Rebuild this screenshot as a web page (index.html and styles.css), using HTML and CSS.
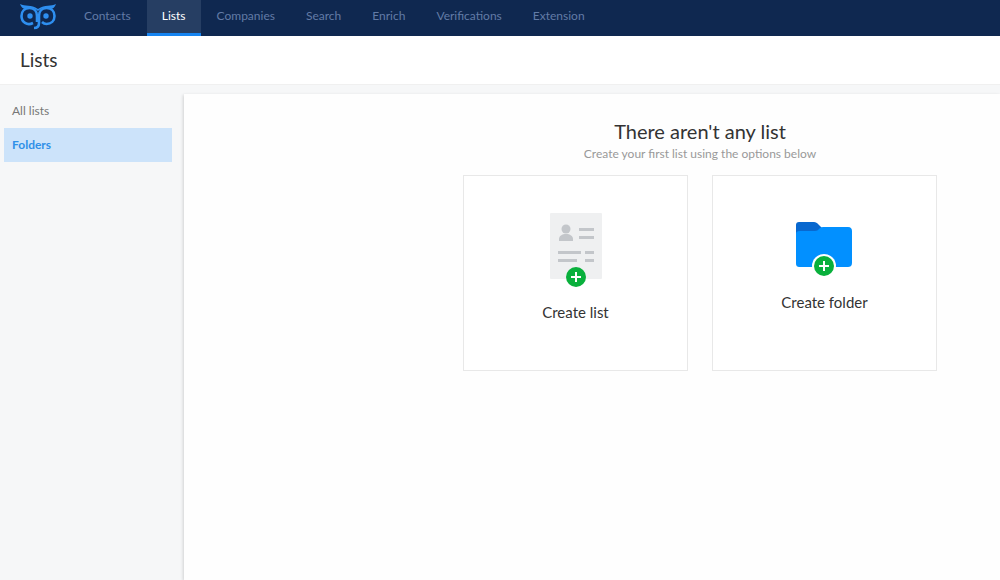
FILE: index.html
```html
<!DOCTYPE html>
<html lang="en">
<head>
  <meta charset="UTF-8">
  <meta name="viewport" content="width=device-width, initial-scale=1.0">
  <title>Lists</title>
  <link rel="stylesheet" href="styles.css">
</head>
<body>
  <header class="navbar">
    <a href="#" class="logo" aria-label="Home">
      <svg width="38" height="26" viewBox="0 0 38 26" fill="none" stroke="#2e8ff0" stroke-width="2.6">
        <path d="M1 0 C6 3 12 0 19 5 C26 0 32 3 37 0 C36 3 34 5 31 5 C27 3 22 4 19 7 C16 4 11 3 7 5 C4 5 2 3 1 0 Z" fill="#2e8ff0" stroke="none"/>
        <path d="M14 19 C8 22 2.500 18 2.500 12 C2.500 7 6 4 10.500 4 C15 4 18 7 18 12 V18"/>
        <path d="M15 24 C19 24 20 22 20 19 V12 C20 7 23 4 27.500 4 C32 4 35.500 7 35.500 12 C35.500 17 32 20 27.500 20 C25 20 24 19 23 18"/>
        <circle cx="11" cy="12" r="2.700" fill="#2e8ff0" stroke="none"/>
        <circle cx="27" cy="12" r="2.700" fill="#2e8ff0" stroke="none"/>
      </svg>
    </a>
    <nav class="nav-links">
      <a href="#">Contacts</a>
      <a href="#" class="active">Lists</a>
      <a href="#">Companies</a>
      <a href="#">Search</a>
      <a href="#">Enrich</a>
      <a href="#">Verifications</a>
      <a href="#">Extension</a>
    </nav>
  </header>

  <div class="page-title">
    <h1>Lists</h1>
  </div>

  <div class="layout">
    <aside class="sidebar">
      <a href="#">All lists</a>
      <a href="#" class="active">Folders</a>
    </aside>

    <main class="content">
      <h2>There aren't any list</h2>
      <p>Create your first list using the options below</p>
      <div class="cards">
        <button class="card">
          <svg width="52" height="75" viewBox="0 0 52 75">
            <rect width="52" height="66" rx="1" fill="#eff0f1"/>
            <g fill="#c3c6ca">
              <circle cx="16" cy="16" r="4.500"/>
              <path d="M9 28 V26 C9 23 12 21 16 21 C20 21 23 23 23 26 V28 Z"/>
              <rect x="29" y="15" width="15" height="3"/>
              <rect x="29" y="23" width="15" height="3"/>
              <rect x="8" y="38" width="23" height="3"/>
              <rect x="35" y="38" width="9" height="3"/>
              <rect x="8" y="46" width="19" height="3"/>
              <rect x="35" y="46" width="9" height="3"/>
            </g>
            <circle cx="26" cy="64" r="10" fill="#09b03c"/>
            <path d="M26 59 V69 M21 64 H31" stroke="#fff" stroke-width="2"/>
          </svg>
          <span>Create list</span>
        </button>
        <button class="card">
          <svg width="58" height="56" viewBox="0 0 58 56">
            <path d="M0 12 V3 C0 1 1 0 3 0 H18 C20 0 21 1 22 2 L26 6 V12 Z" fill="#0868cf"/>
            <path d="M0 12 C0 10 1 9 4 9 H19 C21 9 22 8 23 7 C24 6 25 5 27 5 H52 C55 5 56 7 56 9 V41 C56 44 54 45 52 45 H4 C1 45 0 44 0 41 Z" fill="#0290ff"/>
            <circle cx="28" cy="44" r="12" fill="#fff"/>
            <circle cx="28" cy="44" r="10" fill="#09b03c"/>
            <path d="M28 39 V49 M23 44 H33" stroke="#fff" stroke-width="2"/>
          </svg>
          <span>Create folder</span>
        </button>
      </div>
    </main>
  </div>
</body>
</html>
```
FILE: styles.css
```css
* {
  box-sizing: border-box;
}
body {
  margin: 0;
  min-height: 100vh;
  display: flex;
  flex-direction: column;
  font-family: Lato, "Liberation Sans", sans-serif;
  color: #333;
  background: #f6f7f8;
}
a {
  text-decoration: none;
}
.navbar {
  display: flex;
  height: 36px;
  padding-left: 19px;
  background: #0f2850;
}
.logo {
  width: 50px;
  padding-top: 4px;
}
.logo svg {
  display: block;
}
.nav-links {
  display: flex;
  gap: 1px;
}
.nav-links a {
  padding: 0 15px;
  font-size: 12px;
  line-height: 32px;
  color: #627ba6;
}
.nav-links .active {
  color: #fff;
  background: #263e63;
  border-bottom: 3px solid #1684f0;
}
.page-title {
  padding: 0 20px;
  background: #fff;
  border-bottom: 1px solid #f0f0f0;
}
.page-title h1 {
  margin: 0;
  font-size: 19px;
  font-weight: 400;
  line-height: 48px;
}
.layout {
  flex: 1;
  display: flex;
  padding-top: 9px;
}
.sidebar {
  width: 184px;
  padding: 0 12px 0 4px;
}
.sidebar a {
  display: block;
  padding: 0 8px;
  font-size: 12px;
  line-height: 34px;
  color: #777;
}
.sidebar .active {
  font-weight: 700;
  color: #2f90e8;
  background: #cce3fa;
}
.content {
  flex: 1;
  padding: 24px 0 24px 216px;
  text-align: center;
  background: #fefefe;
  box-shadow: -1px 1px 3px rgba(0, 0, 0, 0.15);
}
.content h2 {
  margin: 0;
  font-size: 20px;
  font-weight: 400;
  line-height: 27px;
}
.content p {
  margin: 0 0 12px;
  font-size: 12px;
  line-height: 18px;
  color: #999;
}
.cards {
  display: flex;
  justify-content: center;
  gap: 24px;
}
.card {
  width: 225px;
  height: 196px;
  padding: 0 0 12px;
  display: flex;
  flex-direction: column;
  align-items: center;
  justify-content: center;
  gap: 14px;
  font-family: inherit;
  font-size: 15px;
  line-height: 20px;
  color: #333;
  background: #fff;
  border: 1px solid #e8e8e8;
  cursor: pointer;
}
.card:hover {
  border-color: #2f90e8;
}
```
